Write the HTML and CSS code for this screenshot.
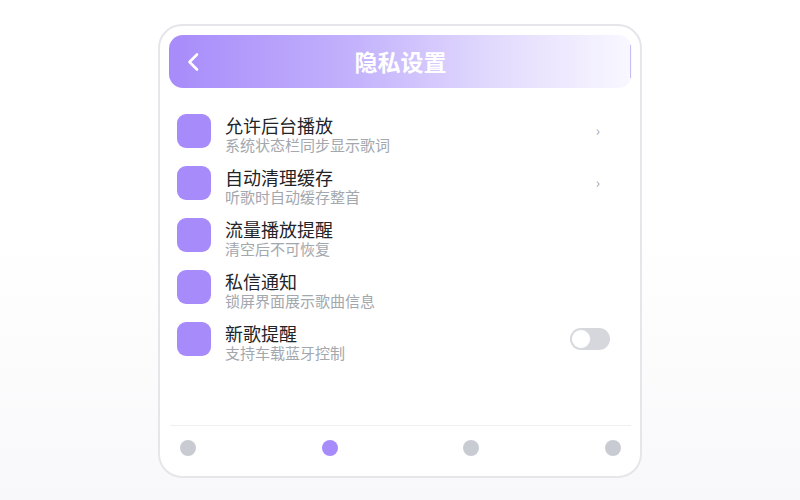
FILE: index.html
```html
<!DOCTYPE html>
<html lang="zh-CN">
<head>
<meta charset="utf-8">
<title>隐私设置</title>
<link rel="stylesheet" href="styles.css">
</head>
<body>
<div class="phone">
  <header class="topbar">
    <span class="back">
      <svg width="14" height="20" viewBox="0 0 14 20"><path d="M11 2.5 L3.5 10 L11 17.5" fill="none" stroke="#fff" stroke-width="2.6" stroke-linecap="round" stroke-linejoin="round"/></svg>
    </span>
    <h1 class="title">隐私设置</h1>
    <span class="edge"></span>
  </header>
  <ul class="list">
    <li class="row">
      <span class="icon"></span>
      <div class="text"><div class="name">允许后台播放</div><div class="desc">系统状态栏同步显示歌词</div></div>
      <span class="chev">›</span>
    </li>
    <li class="row">
      <span class="icon"></span>
      <div class="text"><div class="name">自动清理缓存</div><div class="desc">听歌时自动缓存整首</div></div>
      <span class="chev">›</span>
    </li>
    <li class="row">
      <span class="icon"></span>
      <div class="text"><div class="name">流量播放提醒</div><div class="desc">清空后不可恢复</div></div>
    </li>
    <li class="row">
      <span class="icon"></span>
      <div class="text"><div class="name">私信通知</div><div class="desc">锁屏界面展示歌曲信息</div></div>
    </li>
    <li class="row">
      <span class="icon"></span>
      <div class="text"><div class="name">新歌提醒</div><div class="desc">支持车载蓝牙控制</div></div>
      <span class="toggle"><span class="knob"></span></span>
    </li>
  </ul>
  <nav class="dots">
    <span class="dot"></span>
    <span class="dot active"></span>
    <span class="dot"></span>
    <span class="dot"></span>
  </nav>
</div>
</body>
</html>
```

FILE: styles.css
```css
* { box-sizing: border-box; }
html, body { margin: 0; padding: 0; }
body {
  width: 800px;
  height: 500px;
  background: linear-gradient(180deg, #ffffff 45%, #f8f8fa 100%);
  font-family: "Noto Sans CJK SC", "Noto Sans", sans-serif;
  overflow: hidden;
}
.phone {
  width: 484px;
  height: 454px;
  margin: 24px auto 0;
  border: 2px solid #e6e6ea;
  border-radius: 24px;
  background: #fff;
  padding: 9px 8px 0 9px;
  display: flex;
  flex-direction: column;
}
.topbar {
  height: 53px;
  border-radius: 14px;
  background: linear-gradient(90deg, #a78bfa 0%, #c3b2fc 40%, #e2dafd 70%, #f9f8ff 100%);
  display: flex;
  align-items: center;
  position: relative;
  padding-left: 17px;
}
.back { width: 14px; height: 20px; display: flex; }
.title {
  position: absolute;
  left: 0; right: 0;
  margin: 0;
  text-align: center;
  font-size: 23px;
  font-weight: 700;
  color: #fff;
  line-height: 53px;
  pointer-events: none;
}
.edge {
  position: absolute;
  right: 1px;
  top: 10px;
  width: 1px;
  height: 33px;
  background: #c9bcf7;
}
.list {
  list-style: none;
  margin: 26px 0 0;
  padding: 0 22px 0 8px;
  flex: 1;
}
.row {
  display: flex;
  align-items: flex-start;
  height: 40px;
  margin-bottom: 12px;
  position: relative;
}
.icon {
  width: 34px;
  height: 34px;
  border-radius: 9px;
  background: #a78bfa;
  flex: none;
}
.text { margin-left: 14px; flex: 1; }
.name { font-size: 18px; line-height: 22px; color: #222428; }
.desc { font-size: 15px; line-height: 18px; color: #a3a7ae; }
.chev {
  height: 34px;
  line-height: 32px;
  font-size: 14px;
  color: #9ca3af;
  margin-right: 10px;
}
.toggle {
  margin-top: 6px;
  width: 40px;
  height: 22px;
  border-radius: 11px;
  background: #d5d7dc;
  padding: 2px;
  display: flex;
}
.knob {
  width: 18px;
  height: 18px;
  border-radius: 50%;
  background: #fff;
  box-shadow: 0 0 0 1px #dcdde2;
}
.dots {
  border-top: 1px solid #eeeff2;
  margin: 0 1px 0 1px;
  padding: 14px 10px 20px;
  display: flex;
  justify-content: space-between;
}
.dot {
  width: 16px;
  height: 16px;
  border-radius: 50%;
  background: #c8ccd2;
}
.dot.active { background: #a78bfa; }
```
